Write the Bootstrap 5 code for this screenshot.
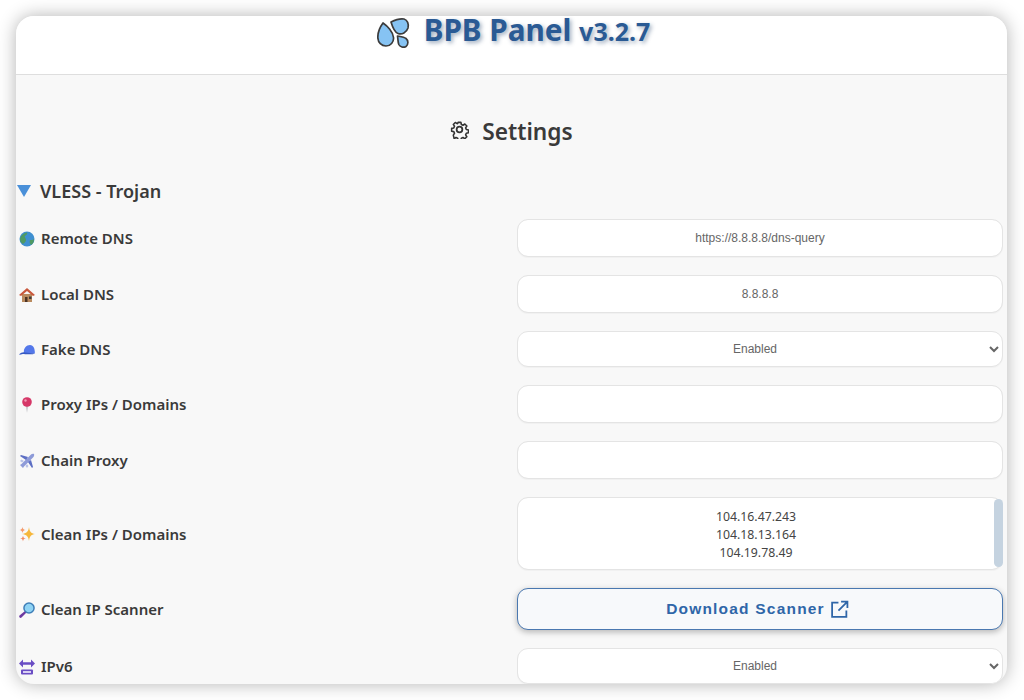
<!doctype html>
<html lang="en">
<head>
<meta charset="utf-8">
<title>BPB Panel</title>
<link href="https://cdn.jsdelivr.net/npm/bootstrap@5.3.0/dist/css/bootstrap.min.css" rel="stylesheet">
<style>
html,body{height:100%;background:#fff;overflow:hidden}
body{padding:16px 17px 16px 16px;font-family:"Noto Sans","Open Sans",sans-serif;color:#3a3a3a}
.frame{height:668px;border-radius:18px;overflow:hidden;background:#f8f8f8;box-shadow:0 0 18px rgba(0,0,0,.3)}
.brand-bar{height:59px;background:#fff;border-bottom:1px solid #dedede;gap:14px;padding-left:4px}
.brand-name{font-size:29.700px;font-weight:700;color:#2a5a94;line-height:28px;text-shadow:2px 2px 4px rgba(42,70,110,.45)}
.brand-ver{font-size:25px}
.settings-head{height:98px;padding-top:16px;gap:13px}
.settings-head span{font-size:22.700px;font-weight:600;color:#3a3a3a}
.gear{margin-top:-6px}
.group-head{height:36px;gap:9px;padding-left:1px}
.group-head span{font-size:18px;font-weight:600;color:#3a3a3a}
.rows{padding-top:10px}
.row-line{margin-bottom:18px;padding-right:4px}
.lab{width:501px;padding-left:3px;padding-top:1px;gap:6px;font-size:15px;font-weight:600;color:#3a3a3a}
.lab svg{flex:none}
.fld{flex:1}
.fld .form-control,.fld .form-select{height:38px;border:1px solid #e4e4e4;border-radius:11px;background-color:#fff;text-align:center;font-family:"Liberation Sans",sans-serif;font-size:12px;color:#666;box-shadow:0 1px 1px rgba(0,0,0,.03)}
.fld .form-select{height:36px;appearance:auto;-webkit-appearance:auto;background-image:none;padding:0 2px 0 4px}
.fld textarea.form-control{height:73px;resize:none;font-family:"Noto Sans",sans-serif;font-size:12.300px;line-height:18px;color:#444;padding:10px 8px 0 0;overflow:hidden}
.ta-thumb{position:absolute;top:2px;right:0;width:9px;height:68px;border-radius:5px;background:#c5d3e0}
.scan-btn{height:42px;width:100%;border:1px solid #4a78b0;border-radius:11px;background:#f7f9fb;color:#2f66a8;font-family:"Liberation Sans",sans-serif;font-size:15.500px;font-weight:700;letter-spacing:1.200px;box-shadow:0 2px 6px rgba(0,0,0,.28);gap:5px;padding:0 17px 0 12px}
.scan-btn:hover{background:#f7f9fb;color:#2f66a8;border-color:#4a78b0}
</style>
</head>
<body>
<div class="frame d-flex flex-column">
  <div class="brand-bar d-flex justify-content-center align-items-start flex-shrink-0">
    <svg width="33" height="33" viewBox="0 0 33 33" aria-hidden="true">
      <g fill="#86c3f3" stroke="#3c3c3c" stroke-width="1.700" stroke-linejoin="round">
        <path d="M6 7C3 11 .8 16 .8 21.500C1 26.500 4.500 30 9 30C13.500 30 17 26 16.500 21.500C16 16 10.500 10 6 7Z"/>
        <path d="M14 6C18 4 24 2.500 27 3C30.500 4 32 8 31 12C29.500 16.500 25 19 21 17.500C17 16 15.500 11 14 6Z"/>
        <path d="M20.500 20C23 20.500 27 21 29 22.500C31.500 24.500 31.500 28.500 29 30.500C26.500 32 23 31 21.800 28.500C20.800 26 21 22.500 20.500 20Z"/>
      </g>
    </svg>
    <div class="brand-name">BPB Panel <span class="brand-ver">v3.2.7</span></div>
  </div>

  <div class="settings-head d-flex justify-content-center align-items-center flex-shrink-0">
    <svg class="gear" width="19" height="19" viewBox="0 0 24 24" fill="none" stroke="#333" stroke-width="2.200" stroke-linejoin="round" aria-hidden="true">
      <path d="M10 2h4l.6 3 2.300 1 2.600-1.700 2.800 2.800-1.700 2.600 1 2.300 3 .6v4l-3 .6-1 2.300 1.700 2.600-2.800 2.800-2.600-1.700-2.300 1-.6 3h-4l-.6-3-2.300-1-2.600 1.700L3.300 19.900 5 17.300l-1-2.300-3-.6v-4l3-.6 1-2.300L3.300 4.900 6.100 2.100 8.700 3.800l.7-.3Z" transform="translate(1.200 1.200) scale(.9)"/>
      <circle cx="12" cy="12" r="3.600"/>
    </svg>
    <span>Settings</span>
  </div>

  <div class="group-head d-flex align-items-center flex-shrink-0">
    <svg width="14" height="12" viewBox="0 0 14 12" aria-hidden="true"><path d="M0 0H14L7 12Z" fill="#4a90d9"/></svg>
    <span>VLESS - Trojan</span>
  </div>

  <div class="rows flex-shrink-0">
    <div class="row-line d-flex align-items-center">
      <label class="lab d-flex align-items-center">
        <svg width="16" height="16" viewBox="0 0 16 16" aria-hidden="true"><circle cx="8" cy="8" r="7.500" fill="#3f8fd0"/><path d="M1 8C2 4 5 2 8 1.500 9 3 7 4 6 5 5 6 7 7 7 9 7 11 5 12 4 13 2 12 1 10 1 8ZM11 9c2 0 3 0 4-1 0 3-1 5-3 6-1-1-2-3-1-5Z" fill="#4f9a63"/></svg>
        Remote DNS
      </label>
      <div class="fld"><input class="form-control" value="https://8.8.8.8/dns-query"></div>
    </div>
    <div class="row-line d-flex align-items-center">
      <label class="lab d-flex align-items-center">
        <svg width="16" height="16" viewBox="0 0 16 16" aria-hidden="true"><path d="M3 7H13V15H3Z" fill="#b98a5e"/><path d="M0 8 8 1 16 8 14 9 8 4 2 9Z" fill="#c9583c"/><path d="M6 10H8.500V15H6Z" fill="#4d3426"/><path d="M10 9.500H12.500V12H10Z" fill="#3e3a3a"/></svg>
        Local DNS
      </label>
      <div class="fld"><input class="form-control" value="8.8.8.8"></div>
    </div>
    <div class="row-line d-flex align-items-center">
      <label class="lab d-flex align-items-center">
        <svg width="16" height="16" viewBox="0 0 16 16" aria-hidden="true"><path d="M5 11C4 6.500 7.500 3 11 3S16 7 15.800 11.500Z" fill="#5478ea"/><path d="M0 12.500C2 10.500 4 10 6 10.500L15.800 11.500C15 12.500 8 12.500 5 12 3 12 1.500 13 0 12.500Z" fill="#3659c4"/></svg>
        Fake DNS
      </label>
      <div class="fld"><select class="form-select"><option>Enabled</option><option>Disabled</option></select></div>
    </div>
    <div class="row-line d-flex align-items-center">
      <label class="lab d-flex align-items-center">
        <svg width="16" height="16" viewBox="0 0 16 16" aria-hidden="true"><path d="M7.300 8H8.700L8 16Z" fill="#9a9aa2"/><circle cx="8" cy="5" r="4.800" fill="#d63768"/><circle cx="6.500" cy="3.500" r="1.200" fill="#f09ab5"/></svg>
        Proxy IPs / Domains
      </label>
      <div class="fld"><input class="form-control"></div>
    </div>
    <div class="row-line d-flex align-items-center">
      <label class="lab d-flex align-items-center">
        <svg width="16" height="16" viewBox="0 0 16 16" aria-hidden="true"><path d="M15 1C14 .5 12.500 1 11.500 2L2.500 11 1 12 4 15 5 13.500 14 4.500C15 3.500 15.500 2 15 1Z" fill="#8e9bd8"/><path d="M9 4 2 2 1 3 7 7ZM12 7 14 14 13 15 9 9Z" fill="#5d6fc4"/><path d="M1 8 3 9.500 5 8 2.500 6.500ZM8 11 6.500 13 8 15 9.500 13Z" fill="#b9c2e8"/></svg>
        Chain Proxy
      </label>
      <div class="fld"><input class="form-control"></div>
    </div>
    <div class="row-line d-flex align-items-center">
      <label class="lab d-flex align-items-center">
        <svg width="16" height="16" viewBox="0 0 16 16" aria-hidden="true"><path d="M10 1C10.500 5.500 12 7.500 16 8 12 8.500 10.500 10.500 10 15 9.500 10.500 7.500 8.500 3 8 7.500 7.500 9.500 5.500 10 1Z" fill="#f6b73c"/><path d="M3.500 .8C3.800 3 4.500 3.700 6.700 4 4.500 4.300 3.800 5 3.500 7.200 3.200 5 2.500 4.300.3 4 2.500 3.700 3.200 3 3.500 .8Z" fill="#f59a6a"/><path d="M4 9.500C4.300 11.500 4.800 12.200 7 12.500 4.800 12.800 4.300 13.500 4 15.500 3.700 13.500 3.200 12.800 1 12.500 3.200 12.200 3.700 11.500 4 9.500Z" fill="#f28a60"/></svg>
        Clean IPs / Domains
      </label>
      <div class="fld position-relative"><textarea class="form-control">104.16.47.243
104.18.13.164
104.19.78.49</textarea><div class="ta-thumb"></div></div>
    </div>
    <div class="row-line d-flex align-items-center">
      <label class="lab d-flex align-items-center">
        <svg width="16" height="16" viewBox="0 0 16 16" aria-hidden="true"><path d="M6 9 7.500 10.500 2.500 15.500C2 16 1 16 .6 15.500S0 14 .5 13.500Z" fill="#6c3aa0"/><circle cx="10" cy="6" r="5.800" fill="#3f7fb8"/><circle cx="10" cy="6" r="4.300" fill="#8fd3f4"/></svg>
        Clean IP Scanner
      </label>
      <div class="fld"><button type="button" class="btn scan-btn d-flex align-items-center justify-content-center">Download Scanner
        <svg width="19" height="19" viewBox="0 0 18 18" fill="none" stroke="#2f66a8" stroke-width="1.700" aria-hidden="true"><path d="M8 2.500H2V16H15.500V10M10.500 1.500H16.500V7.500M16.500 1.500 8 10"/></svg>
      </button></div>
    </div>
    <div class="row-line d-flex align-items-center">
      <label class="lab d-flex align-items-center">
        <svg width="16" height="16" viewBox="0 0 16 16" aria-hidden="true"><path d="M0 4.500 4 .5V3.200H12V.5L16 4.500 12 8.500V5.800H4V8.500Z" fill="#6a4dc4"/><rect x="2" y="10.500" width="12" height="5" rx="1" fill="#6a4dc4"/><path d="M4 12H12V14H4Z" fill="#d8d0f2"/></svg>
        IPv6
      </label>
      <div class="fld"><select class="form-select"><option>Enabled</option><option>Disabled</option></select></div>
    </div>
  </div>
</div>
<script src="https://cdn.jsdelivr.net/npm/bootstrap@5.3.0/dist/js/bootstrap.bundle.min.js"></script>
</body>
</html>
